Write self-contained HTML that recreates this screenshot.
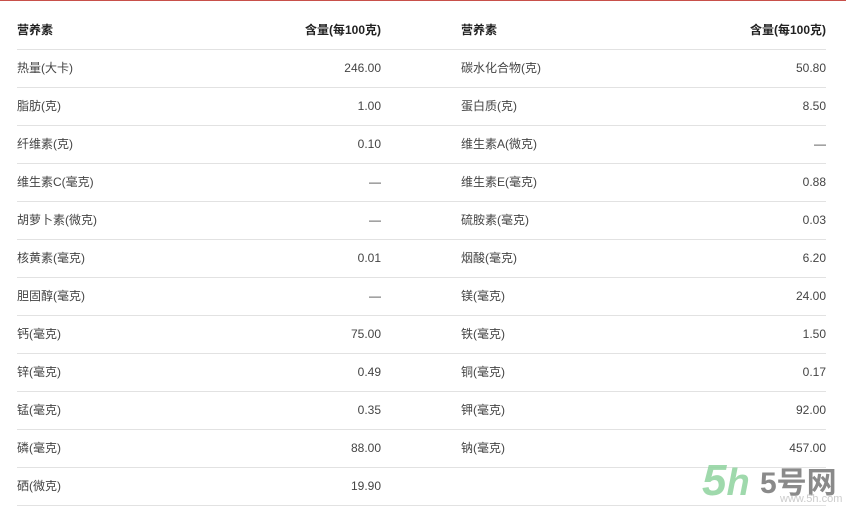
<!DOCTYPE html>
<html><head><meta charset="utf-8"><style>
body{margin:0;width:846px;height:508px;background:#fff;overflow:hidden;position:relative;font-family:"Liberation Sans","Noto Sans CJK SC",sans-serif;font-size:12px;color:#444}
.top{position:absolute;left:0;top:0;width:846px;height:1px;background:#c8504a}
.row{position:absolute;left:17px;width:809px;height:38px;border-bottom:1px solid #e2e2e2;box-sizing:border-box}
.row span{position:absolute;top:0;line-height:37px}
.a{left:0}.b{right:445px}.c{left:444px}.d{right:0}
.h span{font-weight:bold;color:#222}
.logo{position:absolute;left:700px;top:456px}
</style></head><body>
<div class="top"></div>
<div class="row h" style="top:12px"><span class="a">营养素</span><span class="b">含量(每100克)</span><span class="c">营养素</span><span class="d">含量(每100克)</span></div>
<div class="row" style="top:50px"><span class="a">热量(大卡)</span><span class="b">246.00</span><span class="c">碳水化合物(克)</span><span class="d">50.80</span></div>
<div class="row" style="top:88px"><span class="a">脂肪(克)</span><span class="b">1.00</span><span class="c">蛋白质(克)</span><span class="d">8.50</span></div>
<div class="row" style="top:126px"><span class="a">纤维素(克)</span><span class="b">0.10</span><span class="c">维生素A(微克)</span><span class="d">—</span></div>
<div class="row" style="top:164px"><span class="a">维生素C(毫克)</span><span class="b">—</span><span class="c">维生素E(毫克)</span><span class="d">0.88</span></div>
<div class="row" style="top:202px"><span class="a">胡萝卜素(微克)</span><span class="b">—</span><span class="c">硫胺素(毫克)</span><span class="d">0.03</span></div>
<div class="row" style="top:240px"><span class="a">核黄素(毫克)</span><span class="b">0.01</span><span class="c">烟酸(毫克)</span><span class="d">6.20</span></div>
<div class="row" style="top:278px"><span class="a">胆固醇(毫克)</span><span class="b">—</span><span class="c">镁(毫克)</span><span class="d">24.00</span></div>
<div class="row" style="top:316px"><span class="a">钙(毫克)</span><span class="b">75.00</span><span class="c">铁(毫克)</span><span class="d">1.50</span></div>
<div class="row" style="top:354px"><span class="a">锌(毫克)</span><span class="b">0.49</span><span class="c">铜(毫克)</span><span class="d">0.17</span></div>
<div class="row" style="top:392px"><span class="a">锰(毫克)</span><span class="b">0.35</span><span class="c">钾(毫克)</span><span class="d">92.00</span></div>
<div class="row" style="top:430px"><span class="a">磷(毫克)</span><span class="b">88.00</span><span class="c">钠(毫克)</span><span class="d">457.00</span></div>
<div class="row" style="top:468px"><span class="a">硒(微克)</span><span class="b">19.90</span></div>
<div class="logo">
<span style="position:absolute;left:2px;top:0;font:italic bold 44px 'Liberation Sans',sans-serif;color:#8fd39e;opacity:.85">5<span style="font-size:38px">h</span></span>
<span style="position:absolute;left:60px;top:2px;font:bold 30px 'Liberation Sans','Noto Sans CJK SC',sans-serif;color:#8a8a8a;white-space:nowrap">5号网</span>
<span style="position:absolute;left:80px;top:37px;font:11px 'Liberation Sans',sans-serif;color:#ccc;white-space:nowrap">www.5h.com</span>
</div>
</body></html>
